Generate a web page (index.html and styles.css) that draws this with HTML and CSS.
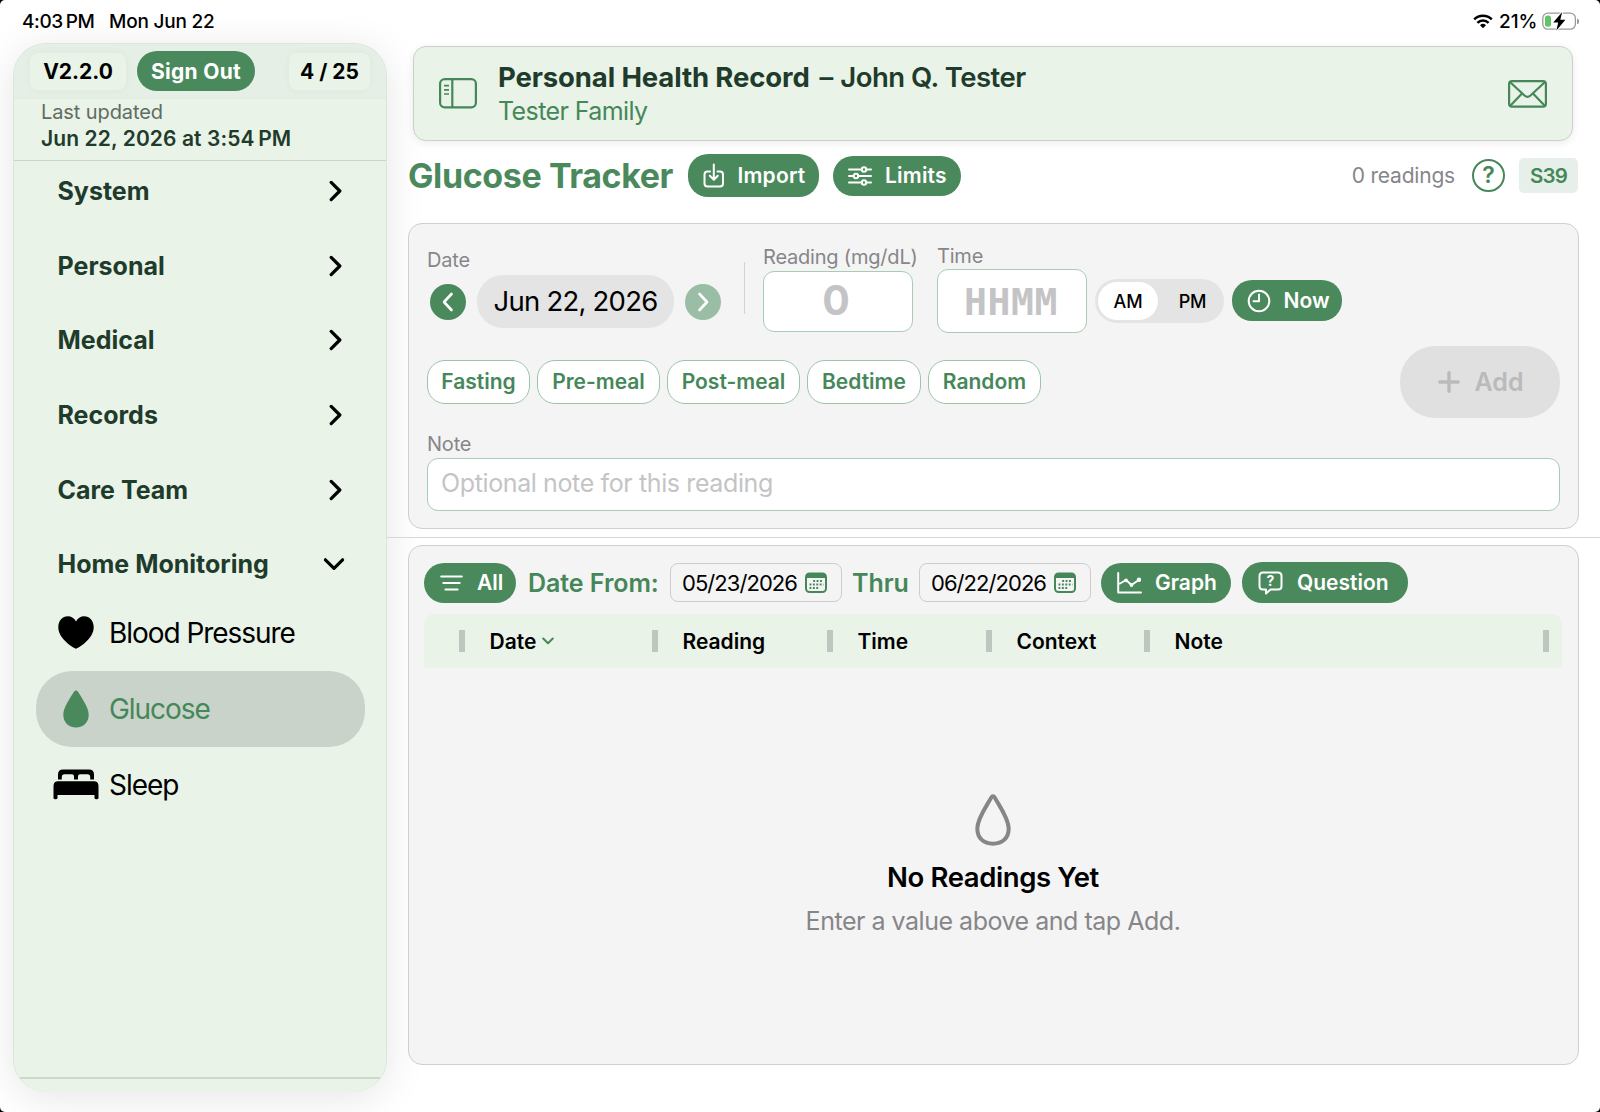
FILE: index.html
```html
<!DOCTYPE html>
<html lang="en">
<head>
    <meta charset="UTF-8">
    <meta name="viewport" content="width=device-width, initial-scale=1.0">
    <title>Glucose Tracker</title>
    <link rel="stylesheet" href="styles.css">
</head>
<body>
    <div class="status-bar">
        <span class="clock">4:03&#8239;PM</span>
        <span class="day">Mon Jun 22</span>
        <div class="status-right">
            <svg class="wifi" width="20" height="15" viewBox="0 0 20 15" fill="none" stroke="#000" stroke-width="2.5">
                <path d="M1.2 5.4a12.6 12.6 0 0 1 17.6 0"/>
                <path d="M4.4 8.9a8 8 0 0 1 11.2 0"/>
                <path d="M10 14.2 7 11.2a4.4 4.4 0 0 1 6 0z" fill="#000" stroke="none"/>
            </svg>
            <span class="percent">21%</span>
            <svg width="38" height="19" viewBox="0 0 38 19">
                <rect x=".8" y="1.2" width="32.6" height="16" rx="5" fill="none" stroke="#9a9a9a" stroke-width="1.3"/>
                <path d="M35.2 6.4c2.4.9 2.4 5 0 5.900z" fill="#8c8c8c"/>
                <rect x="3" y="3.600" width="6" height="11.200" rx="2.500" fill="#62c466"/>
                <path d="M20.200 0 11.200 10.400h5l-1.800 8.200 9-10.800h-5.100z" fill="#000" stroke="#fff" stroke-width="2" paint-order="stroke"/>
            </svg>
        </div>
    </div>

    <div class="layout">
        <div class="sidebar">
            <div class="sidebar-head">
                <span class="tag version">V2.2.0</span>
                <button class="sign-out">Sign Out</button>
                <span class="tag count">4 / 25</span>
            </div>
            <div class="updated">
                <div class="updated-label">Last updated</div>
                <div class="updated-date">Jun 22, 2026 at 3:54&#8239;PM</div>
            </div>
            <div class="nav">
                <div class="group">System<svg width="14" height="22" viewBox="0 0 14 22"><path d="M2.200 2.400 10.800 11l-8.600 8.600"/></svg></div>
                <div class="group">Personal<svg width="14" height="22" viewBox="0 0 14 22"><path d="M2.200 2.400 10.800 11l-8.600 8.600"/></svg></div>
                <div class="group">Medical<svg width="14" height="22" viewBox="0 0 14 22"><path d="M2.200 2.400 10.800 11l-8.600 8.600"/></svg></div>
                <div class="group">Records<svg width="14" height="22" viewBox="0 0 14 22"><path d="M2.200 2.400 10.800 11l-8.600 8.600"/></svg></div>
                <div class="group">Care Team<svg width="14" height="22" viewBox="0 0 14 22"><path d="M2.200 2.400 10.800 11l-8.600 8.600"/></svg></div>
                <div class="group open">Home Monitoring<svg width="22" height="14" viewBox="0 0 22 14"><path d="M2.400 2.800 11 11.300l8.600-8.500"/></svg></div>
            </div>
            <div class="subnav">
                <div class="item">
                    <span class="item-icon">
                        <svg width="36" height="33" viewBox="0 0 36 33"><path d="M18 32.800C15.500 31.800.3 23 .3 11.200.3 4.500 4.500.2 9.800.2c3.700 0 6.600 2 8.200 5.200C19.600 2.200 22.500.2 26.200.2c5.300 0 9.500 4.300 9.500 11C35.700 23 20.500 31.800 18 32.800z"/></svg>
                    </span>
                    Blood Pressure
                </div>
                <div class="item active">
                    <span class="item-icon">
                        <svg width="26" height="38" viewBox="0 0 26 38"><path d="M13 .5c1 0 1.600.6 2.200 1.600C18.500 7.600 25.700 17.500 25.700 24.800c0 7.600-5.200 12.700-12.700 12.700S.3 32.400.3 24.800C.3 17.500 7.500 7.600 10.800 2.100 11.400 1.100 12 .5 13 .5z"/></svg>
                    </span>
                    Glucose
                </div>
                <div class="item">
                    <span class="item-icon">
                        <svg width="46" height="31" viewBox="0 0 46 31"><path d="M5 10.500V5.500Q5 .5 10 .5H36Q41 .5 41 5.500v5H37.200V8Q37.200 5.300 34.500 5.300H27Q25 5.300 25 7.500v3H21V7.500Q21 5.300 19 5.300H11.500Q8.800 5.300 8.800 8v2.500z"/><path d="M.5 17Q.5 12.300 5 12.300H41Q45.500 12.300 45.500 17V29Q45.500 30.300 43.500 30.300T41.500 29V26H4.500v3Q4.500 30.300 2.500 30.300T.5 29z"/></svg>
                    </span>
                    Sleep
                </div>
            </div>
            <div class="sidebar-foot"></div>
        </div>

        <div class="main">
            <div class="record">
                <svg width="38" height="31" viewBox="0 0 38 31" fill="none" stroke="#468759" stroke-width="2.200">
                    <rect x="1.100" y="1.100" width="35.800" height="28.200" rx="4.500"/>
                    <path d="M13.300 1.200v28"/>
                    <path d="M5 7.700h5M5 11.900h5M5 16h5" stroke-width="1.700"/>
                </svg>
                <div class="record-text">
                    <div class="record-title"><b>Personal Health Record</b> – <span>John Q. Tester</span></div>
                    <div class="record-family">Tester Family</div>
                </div>
                <svg width="39" height="28" viewBox="0 0 39 28" fill="none" stroke="#468759" stroke-width="2.200">
                    <rect x="1.100" y="1.100" width="36.800" height="25.600" rx="3"/>
                    <path d="M2 2l14.500 13.500q3 2.600 6 0L37 2M2 26l12-12.500M37 26 25 13.500"/>
                </svg>
            </div>

            <div class="page-head">
                <h1>Glucose Tracker</h1>
                <button class="pill import">
                    <svg width="22" height="26" viewBox="0 0 22 26"><path d="M7 8.500H4.500Q1.500 8.500 1.500 11.500v9Q1.500 23.500 4.500 23.500h12.500Q20 23.500 20 20.500v-9Q20 8.500 17 8.500H14.500M10.800 1.500v15M6.800 12.800l4 4 4-4"/></svg>
                    <span>Import</span>
                </button>
                <button class="pill limits">
                    <svg width="24" height="20" viewBox="0 0 24 20"><path d="M1 3.500h12.500M18.500 3.500H23M1 10h4.500M10.500 10H23M1 16.500h12.500M18.500 16.500H23"/><circle cx="16" cy="3.500" r="2.200"/><circle cx="8" cy="10" r="2.200"/><circle cx="16" cy="16.500" r="2.200"/></svg>
                    <span>Limits</span>
                </button>
                <span class="total">0 readings</span>
                <span class="help">?</span>
                <span class="code">S39</span>
            </div>

            <div class="card form">
                <div class="form-row">
                    <div class="field date-field">
                        <label>Date</label>
                        <div class="stepper">
                            <span class="round"><svg width="12" height="20" viewBox="0 0 12 20"><path d="M9.500 2 2 10l7.500 8"/></svg></span>
                            <span class="date-value">Jun 22, 2026</span>
                            <span class="round next"><svg width="12" height="20" viewBox="0 0 12 20"><path d="M2.500 2l7.500 8-7.500 8"/></svg></span>
                        </div>
                    </div>
                    <div class="separator"></div>
                    <div class="field reading-field">
                        <label>Reading (mg/dL)</label>
                        <div class="box reading-box">0</div>
                    </div>
                    <div class="field time-field">
                        <label>Time</label>
                        <div class="time-row">
                            <div class="box time-box">HHMM</div>
                            <div class="segment"><span class="on">AM</span><span>PM</span></div>
                            <button class="pill now">
                                <svg width="24" height="24" viewBox="0 0 24 24"><circle cx="12" cy="12" r="10.300"/><path d="M12 5.500V12.300H6.500"/></svg>
                                <span>Now</span>
                            </button>
                        </div>
                    </div>
                </div>
                <div class="context-row">
                    <span class="chip fasting">Fasting</span>
                    <span class="chip pre">Pre-meal</span>
                    <span class="chip post">Post-meal</span>
                    <span class="chip bedtime">Bedtime</span>
                    <span class="chip random">Random</span>
                    <button class="add">
                        <svg width="22" height="22" viewBox="0 0 22 22"><path d="M11 1.800v18.400M1.800 11h18.400"/></svg>
                        <span>Add</span>
                    </button>
                </div>
                <div class="note-field">
                    <label>Note</label>
                    <div class="note-box">Optional note for this reading</div>
                </div>
            </div>

            <div class="rule"></div>

            <div class="card list">
                <div class="filters">
                    <button class="pill all">
                        <svg width="23" height="16" viewBox="0 0 23 16"><path d="M1.200 1.500h20.600M3.300 8h16.400M5.400 14.500h12.200"/></svg>
                        <span>All</span>
                    </button>
                    <span class="filter-label from">Date From:</span>
                    <span class="date-box">
                        <b>05/23/2026</b>
                        <svg width="22" height="21" viewBox="0 0 22 21"><rect x="1" y="1.500" width="20" height="18.500" rx="3.500" fill="none" stroke="#468759" stroke-width="2"/><path d="M1 6V4.500Q1 1 4.500 1h13Q21 1 21 4.500V6z" fill="#468759"/><path d="M8.200 9h10M4.500 12.500h14M4.500 16h10" stroke="#468759" stroke-width="1.900" stroke-dasharray="1.900 1.500"/></svg>
                    </span>
                    <span class="filter-label thru">Thru</span>
                    <span class="date-box">
                        <b>06/22/2026</b>
                        <svg width="22" height="21" viewBox="0 0 22 21"><rect x="1" y="1.500" width="20" height="18.500" rx="3.500" fill="none" stroke="#468759" stroke-width="2"/><path d="M1 6V4.500Q1 1 4.500 1h13Q21 1 21 4.500V6z" fill="#468759"/><path d="M8.200 9h10M4.500 12.500h14M4.500 16h10" stroke="#468759" stroke-width="1.900" stroke-dasharray="1.900 1.500"/></svg>
                    </span>
                    <button class="pill graph">
                        <svg width="25" height="22" viewBox="0 0 25 22"><path d="M1.200 1v19.500H24M3 11.500 9 8l5.500 5L22.500 7.500"/><g class="dots"><circle cx="9" cy="8.300" r="1.900"/><circle cx="14.500" cy="13" r="1.900"/><circle cx="22" cy="7.700" r="2.200"/></g></svg>
                        <span>Graph</span>
                    </button>
                    <button class="pill question">
                        <svg width="25" height="24" viewBox="0 0 25 24"><path d="M5 1.500h15Q23.500 1.500 23.500 5v10Q23.500 18.500 20 18.500H12.500L8 22.500V18.500H5Q1.500 18.500 1.500 15V5Q1.500 1.500 5 1.500z"/><text x="12.500" y="15" text-anchor="middle">?</text></svg>
                        <span>Question</span>
                    </button>
                </div>
                <div class="table-head">
                    <span class="col col-mark"></span>
                    <span class="col col-date">Date<svg width="12" height="8" viewBox="0 0 12 8"><path d="M1.200 1.500 6 6.200l4.800-4.700" fill="none" stroke="#468759" stroke-width="2" stroke-linecap="round" stroke-linejoin="round"/></svg></span>
                    <span class="col col-reading">Reading</span>
                    <span class="col col-time">Time</span>
                    <span class="col col-context">Context</span>
                    <span class="col col-note">Note</span>
                </div>
                <div class="empty">
                    <svg width="38" height="54" viewBox="0 0 38 54"><path d="M19 3.200c-.8 0-1.300.5-1.800 1.400C13 12.500 3.300 25.500 3.300 35.500 3.300 45 9.500 50.700 19 50.700S34.700 45 34.700 35.500C34.700 25.500 25 12.500 20.800 4.600 20.300 3.700 19.800 3.200 19 3.200z" fill="none" stroke="#868686" stroke-width="4"/></svg>
                    <div class="empty-title">No Readings Yet</div>
                    <div class="empty-text">Enter a value above and tap Add.</div>
                </div>
            </div>
        </div>
    </div>
</body>
</html>
```

FILE: styles.css
```css
* {
    box-sizing: border-box;
}
html {
    background-color: #000;
}
body {
    width: 1600px;
    height: 1112px;
    margin: 0;
    overflow: hidden;
    border-radius: 5px;
    background-color: #fff;
    color: #000;
    font-family: Inter, "Liberation Sans", sans-serif;
    white-space: nowrap;
}
button {
    border: none;
    padding: 0;
    font-family: inherit;
}
svg {
    display: block;
    flex: none;
}

/* Status bar */
.status-bar {
    height: 43px;
    padding: 0 20px 0 22px;
    display: flex;
    align-items: center;
    font-size: 19px;
    font-weight: 500;
    letter-spacing: -0.2px;
}
.clock {
    width: 87px;
    letter-spacing: -0.4px;
}
.status-right {
    margin-left: auto;
    display: flex;
    align-items: center;
}
.percent {
    width: 43px;
    margin-left: 6px;
    letter-spacing: 0;
}

.layout {
    display: flex;
    height: 1069px;
}

/* Sidebar */
.sidebar {
    width: 374px;
    height: 1049px;
    margin-left: 13px;
    display: flex;
    flex-direction: column;
    overflow: hidden;
    background-color: #e9f3e8;
    border: 1px solid #dbe6dc;
    border-bottom: none;
    border-radius: 33px;
    box-shadow: 0 6px 40px rgba(0, 0, 0, 0.1);
}
.sidebar-head {
    height: 55px;
    padding: 0 16px;
    display: flex;
    align-items: center;
    background-color: #e5efe5;
    border-bottom: 1px solid #e1ece1;
    font-size: 21px;
    font-weight: 700;
}
.tag {
    height: 37px;
    line-height: 37px;
    text-align: center;
    background-color: #e9f3e8;
    border-radius: 8px;
    box-shadow: 0 0 8px rgba(0, 0, 0, 0.04);
}
.version {
    width: 96px;
}
.count {
    width: 81px;
    margin-left: auto;
}
.sign-out {
    width: 118px;
    height: 40px;
    margin-left: 11px;
    background-color: #4a895c;
    border-radius: 20px;
    color: #fff;
    font-size: 21px;
    font-weight: 700;
    letter-spacing: 0.3px;
}
.updated {
    height: 62px;
    border-bottom: 1px solid #c9d5ca;
    padding-left: 27px;
}
.updated-label {
    font-size: 20px;
    line-height: 26px;
    letter-spacing: -0.1px;
    color: #5f6c62;
}
.updated-date {
    font-size: 21px;
    line-height: 27px;
    font-weight: 600;
    letter-spacing: 0.1px;
    color: #1f3b2b;
}
.nav {
    padding: 15px 41px 0 43.5px;
    display: flex;
    flex-direction: column;
    gap: 44.7px;
}
.group {
    height: 30px;
    display: flex;
    align-items: center;
    justify-content: space-between;
    font-size: 25px;
    font-weight: 700;
    color: #1f3b2b;
}
.group svg {
    margin-right: 2px;
    fill: none;
    stroke: #000;
    stroke-width: 3.2;
    stroke-linecap: round;
    stroke-linejoin: round;
}
.group.open svg {
    margin-right: 0;
}
.subnav {
    margin: 15.5px 21px 0 22px;
}
.item {
    height: 76px;
    display: flex;
    align-items: center;
    border-radius: 36px;
    font-size: 28px;
    letter-spacing: -1.05px;
}
.item-icon {
    width: 48px;
    margin: 0 9px 0 16px;
    display: flex;
    justify-content: center;
}
.item.active {
    background-color: #c9d3c9;
    color: #468759;
}
.item.active svg {
    fill: #4a895c;
}
.sidebar-foot {
    height: 15px;
    margin-top: auto;
    border-top: 2px solid #cbd8cc;
}

/* Main column */
.main {
    flex: 1;
    padding-top: 3px;
}
.record {
    height: 95px;
    margin: 0 27px 0 26px;
    padding: 0 25px;
    display: flex;
    align-items: center;
    background-color: #e9f3e8;
    border: 1px solid #cbd0cb;
    border-radius: 13px;
    box-shadow: 0 2px 8px rgba(0, 0, 0, 0.08);
}
.record-text {
    flex: 1;
    margin-left: 21px;
}
.record-title {
    font-size: 27.5px;
    line-height: 34px;
    font-weight: 600;
    color: #1f3b2b;
}
.record-title b {
    margin-right: 3px;
    font-weight: 700;
    letter-spacing: -0.12px;
}
.record-title span {
    letter-spacing: -0.5px;
}
.record-family {
    font-size: 25px;
    line-height: 34px;
    letter-spacing: -0.6px;
    color: #468759;
}
.page-head {
    height: 43px;
    margin: 13px 22px 0 21px;
    display: flex;
    align-items: center;
}
h1 {
    width: 280px;
    margin: 0;
    font-size: 34px;
    font-weight: 700;
    letter-spacing: -0.4px;
    color: #4a895c;
}
.pill {
    height: 40px;
    display: flex;
    align-items: center;
    background-color: #4a895c;
    border-radius: 20px;
    color: #fff;
    font-size: 21px;
    font-weight: 600;
}
.pill svg {
    fill: none;
    stroke: #fff;
    stroke-width: 2;
    stroke-linecap: round;
    stroke-linejoin: round;
}
.import {
    width: 131px;
    height: 43px;
    padding-left: 15px;
    gap: 12.5px;
    letter-spacing: 0.2px;
}
.limits {
    width: 128px;
    margin-left: 14px;
    padding-left: 15px;
    gap: 13px;
    letter-spacing: 0.2px;
}
.total {
    margin-left: auto;
    font-size: 21px;
    letter-spacing: -0.2px;
    color: #86868a;
}
.help {
    width: 33px;
    height: 33px;
    margin: 0 14px 0 17px;
    border: 2.5px solid #468759;
    border-radius: 50%;
    font-size: 23px;
    line-height: 28px;
    font-weight: 600;
    text-align: center;
    color: #468759;
}
.code {
    width: 59px;
    height: 35px;
    border-radius: 5px;
    background-color: #e6efe9;
    font-size: 20.5px;
    line-height: 35px;
    font-weight: 600;
    letter-spacing: -0.8px;
    text-align: center;
    color: #468759;
}

/* Cards */
.card {
    margin: 0 21px;
    background-color: #f4f4f4;
    border: 1px solid #cfcfcf;
    border-radius: 14px;
}
.form {
    height: 306px;
    margin-top: 26px;
    padding: 20px 18px 0;
}
label {
    display: block;
    font-size: 20px;
    line-height: 22px;
    letter-spacing: -0.2px;
    color: #86868a;
}
.form-row {
    height: 89px;
    display: flex;
    align-items: center;
}
.date-field {
    width: 317px;
}
.stepper {
    height: 53px;
    margin-top: 4px;
    padding-left: 3px;
    display: flex;
    align-items: center;
    gap: 11px;
}
.round {
    width: 36px;
    height: 36px;
    display: flex;
    align-items: center;
    justify-content: center;
    border-radius: 50%;
    background-color: #4a895c;
}
.round svg {
    fill: none;
    stroke: #fff;
    stroke-width: 2.6;
    stroke-linecap: round;
    stroke-linejoin: round;
}
.round.next {
    background-color: #9abea5;
}
.date-value {
    width: 197px;
    height: 53px;
    border-radius: 26px;
    background-color: #e4e4e4;
    font-size: 27.5px;
    line-height: 53px;
    letter-spacing: -0.75px;
    text-align: center;
}
.separator {
    width: 1px;
    height: 52px;
    margin-top: -2px;
    background-color: #d2d2d2;
}
.reading-field {
    width: 174px;
    margin-left: 18px;
}
.box {
    width: 150px;
    background-color: #fff;
    border: 1.5px solid #a9cdb4;
    border-radius: 11px;
    color: #c4c4c6;
    font-weight: 700;
    text-align: center;
}
.reading-box {
    height: 61px;
    margin-top: 3px;
    padding-right: 4px;
    font-size: 41px;
    line-height: 57px;
}
.time-row {
    display: flex;
    align-items: center;
    margin-top: 2px;
}
.time-box {
    height: 64px;
    font-family: "DejaVu Sans Mono", monospace;
    font-size: 38px;
    line-height: 65px;
    letter-spacing: 0.6px;
    padding-right: 2px;
}
.segment {
    width: 129px;
    height: 44px;
    margin: 1px 8px 0;
    padding: 3px;
    display: flex;
    border-radius: 22px;
    background-color: #e4e4e4;
}
.segment span {
    width: 60px;
    font-size: 18px;
    line-height: 39px;
    font-weight: 500;
    letter-spacing: -0.2px;
    text-align: center;
}
.segment span + span {
    width: 69px;
    margin-right: -6px;
}
.segment .on {
    height: 38px;
    background-color: #fff;
    border-radius: 19px;
}
.now {
    width: 110px;
    height: 41px;
    padding-left: 14.5px;
    gap: 13px;
}
.context-row {
    height: 72px;
    margin-top: 13px;
    display: flex;
    align-items: center;
    gap: 7px;
}
.chip {
    height: 44px;
    border: 1.5px solid #9cc5a8;
    border-radius: 18px;
    background-color: #fff;
    font-size: 21px;
    line-height: 41px;
    font-weight: 600;
    text-align: center;
    color: #468759;
}
.fasting { width: 103px; }
.pre { width: 123px; }
.post { width: 133px; }
.bedtime { width: 114px; }
.random { width: 113px; }
.add {
    width: 160px;
    height: 72px;
    margin-left: auto;
    padding-left: 38px;
    display: flex;
    align-items: center;
    gap: 14.5px;
    border-radius: 35px;
    background-color: #e0e0e0;
    color: #bababc;
    font-size: 25px;
    font-weight: 600;
}
.add svg {
    stroke: #bababc;
    stroke-width: 3.4;
    stroke-linecap: round;
}
.note-field {
    margin-top: 15px;
}
.note-box {
    height: 53px;
    margin-top: 3px;
    padding-left: 13px;
    border: 1.5px solid #a9cdb4;
    border-radius: 11px;
    background-color: #fff;
    color: #c4c4c6;
    font-size: 25px;
    line-height: 49px;
    letter-spacing: -0.38px;
}
.rule {
    height: 1px;
    margin: 8px 0 7px;
    background-color: #d6d8d6;
}

/* Readings list */
.list {
    height: 520px;
    padding: 16px 16px 0 15px;
}
.filters {
    height: 41px;
    display: flex;
    align-items: center;
}
.all {
    width: 92px;
    padding-left: 16px;
    gap: 14px;
}
.filter-label {
    font-size: 25px;
    font-weight: 600;
    letter-spacing: -0.05px;
    color: #468759;
}
.from {
    width: 142px;
    margin-left: 12px;
}
.thru {
    width: 67px;
    margin-left: 10px;
}
.date-box {
    width: 172px;
    height: 39px;
    padding: 0 14px 0 11px;
    display: flex;
    align-items: center;
    justify-content: space-between;
    border: 1.5px solid #cdcdcd;
    border-radius: 8px;
    font-size: 22px;
    letter-spacing: -0.95px;
}
.date-box b {
    font-weight: 400;
}
.graph {
    width: 130px;
    margin-left: 10px;
    padding-left: 16px;
    gap: 13px;
}
.graph .dots {
    fill: #fff;
    stroke: none;
}
.question {
    width: 166px;
    height: 41px;
    margin-left: 11px;
    padding-left: 16px;
    gap: 14px;
}
.question text {
    fill: #fff;
    stroke: none;
    font-size: 14px;
    font-weight: 700;
}
.table-head {
    height: 54px;
    margin-top: 11px;
    padding-right: 13px;
    display: flex;
    align-items: center;
    border-radius: 10px 10px 0 0;
    background-color: #e9f3e8;
    font-size: 21px;
    font-weight: 600;
}
.col {
    height: 22px;
    display: flex;
    align-items: center;
    padding-left: 24.5px;
    border-right: 6px solid #bfc5bf;
    line-height: 21px;
}
.col svg {
    margin-left: 6px;
}
.col-mark { width: 41px; }
.col-date { width: 193px; }
.col-reading { width: 175px; }
.col-time { width: 159px; }
.col-context { width: 158px; }
.col-note { flex: 1; }
.empty {
    margin-top: 125px;
    display: flex;
    flex-direction: column;
    align-items: center;
}
.empty-title {
    margin-top: 13px;
    font-size: 27.5px;
    line-height: 34px;
    font-weight: 600;
    letter-spacing: -0.4px;
}
.empty-text {
    margin-top: 10px;
    font-size: 25px;
    line-height: 34px;
    letter-spacing: -0.48px;
    color: #86868a;
}
```
